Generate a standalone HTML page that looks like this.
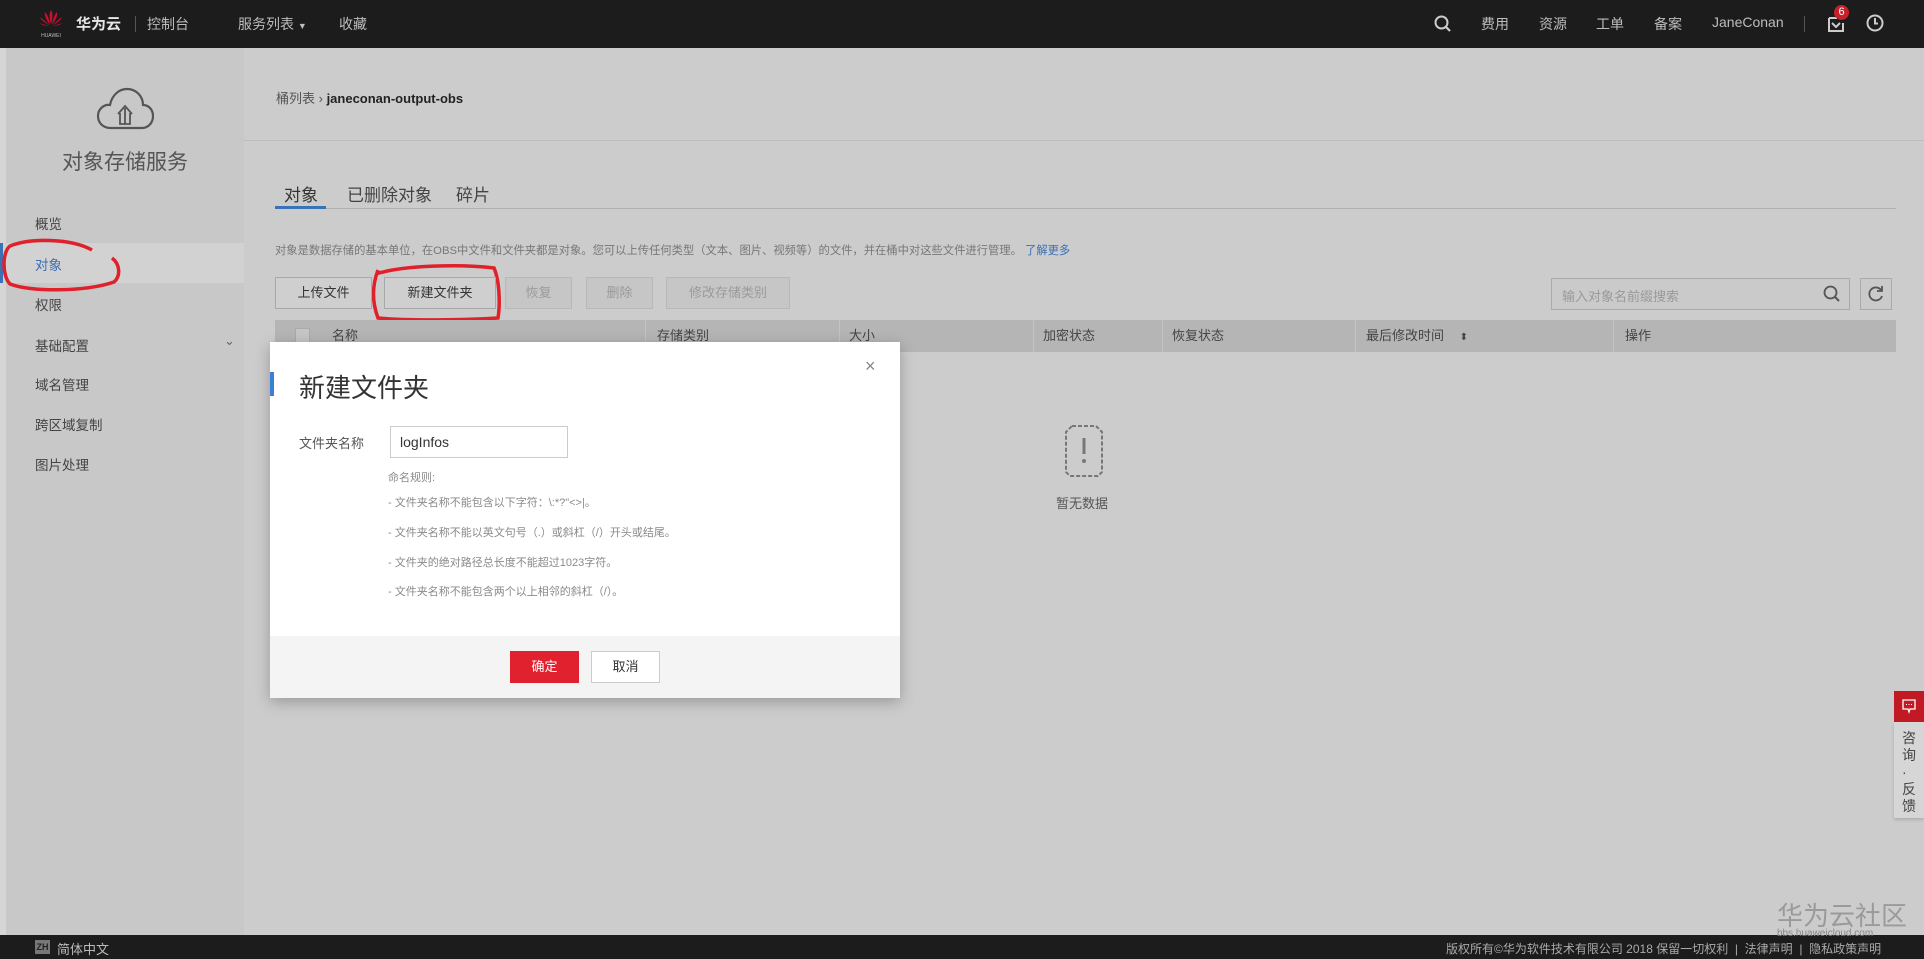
<!DOCTYPE html>
<html><head><meta charset="utf-8"><style>
*{margin:0;padding:0;box-sizing:border-box}
body{width:1924px;height:959px;overflow:hidden;position:relative;background:#cccccc;font-family:"Liberation Sans","Noto Sans CJK SC",sans-serif;color:#333}
.a{position:absolute;white-space:nowrap}
.top{position:absolute;left:0;top:0;width:1924px;height:48px;background:#1c1c1c}
.top .a{color:#bdbdbd;font-size:14px;top:14px}
.side{position:absolute;left:6px;top:48px;width:238px;height:887px;background:#c8c8c8}
.side .m{position:absolute;left:29px;font-size:13.5px;color:#444}
.btn{position:absolute;top:277px;height:32px;border:1px solid #a8a8a8;background:#cfcfcf;font-size:13px;text-align:center;line-height:30px;color:#333}
.btn.d{color:#9a9a9a;background:#c6c6c6;border-color:#b8b8b8}
.th{position:absolute;top:320px;height:32px;font-size:13px;line-height:32px;color:#444}
.sep{position:absolute;top:320px;width:1px;height:32px;background:#c4c4c4}
.rule{position:absolute;left:388px;font-size:11px;color:#8a8a8a}
.foot{position:absolute;left:0;top:935px;width:1924px;height:24px;background:#1c1c1c}
</style></head><body>
<div class="top">
  <svg class="a" style="left:37px;top:8px" width="28" height="30" viewBox="0 0 28 30"><g fill="#c8102e"><path d="M14 2c-2 3-2 8 0 14c2-6 2-11 0-14z"/><path d="M8 4c-1 4 2 9 5 13c-1-5-2-10-5-13z"/><path d="M20 4c1 4-2 9-5 13c1-5 2-10 5-13z"/><path d="M3 9c1 3 5 6 9 8c-3-3-6-6-9-8z"/><path d="M25 9c-1 3-5 6-9 8c3-3 6-6 9-8z"/><path d="M2 15c3 2 7 3 10 3c-3-1-7-2-10-3z"/><path d="M26 15c-3 2-7 3-10 3c3-1 7-2 10-3z"/></g><text x="14" y="29" font-size="5" fill="#bbb" text-anchor="middle" font-family="Liberation Sans">HUAWEI</text></svg>
  <div class="a" style="left:76px;top:13px;color:#e6e6e6;font-size:15px;font-weight:bold">华为云</div>
  <div class="a" style="left:135px;top:16px;width:1px;height:16px;background:#555"></div>
  <div class="a" style="left:147px">控制台</div>
  <div class="a" style="left:238px">服务列表 <span style="font-size:9px">▼</span></div>
  <div class="a" style="left:339px">收藏</div>
  <svg class="a" style="left:1433px;top:14px" width="20" height="20" viewBox="0 0 20 20"><circle cx="8.5" cy="8.5" r="6" fill="none" stroke="#ccc" stroke-width="2"/><path d="M13 13l4 4" stroke="#ccc" stroke-width="2.2"/></svg>
  <div class="a" style="left:1481px">费用</div>
  <div class="a" style="left:1539px">资源</div>
  <div class="a" style="left:1596px">工单</div>
  <div class="a" style="left:1654px">备案</div>
  <div class="a" style="left:1712px">JaneConan</div>
  <div class="a" style="left:1804px;top:16px;width:1px;height:16px;background:#555"></div>
  <svg class="a" style="left:1826px;top:14px" width="20" height="20" viewBox="0 0 20 20"><path d="M3 4h8M3 4v13h14v-8" fill="none" stroke="#ccc" stroke-width="2"/><path d="M6 9l4 4 4-4" fill="none" stroke="#ccc" stroke-width="2"/></svg>
  <div class="a" style="left:1834px;top:5px;width:15px;height:15px;border-radius:50%;background:#c8202a;color:#fff;font-size:11px;line-height:15px;text-align:center">6</div>
  <svg class="a" style="left:1865px;top:13px" width="20" height="20" viewBox="0 0 20 20"><circle cx="10" cy="10" r="7.5" fill="none" stroke="#ccc" stroke-width="2"/><path d="M10 5v5.5h3" fill="none" stroke="#ccc" stroke-width="2"/></svg>
</div>
<div class="a" style="left:0;top:48px;width:6px;height:887px;background:#d6d6d6"></div>
<div class="side">
  <svg class="a" style="left:90px;top:38px" width="58" height="46" viewBox="0 0 58 46"><path d="M15 42C6 42 2 36 2 30c0-7 6-12 12-11C16 9 23 3 31 3c9 0 16 7 16 16c6 0 10 5 10 11c0 7-5 12-11 12z" fill="none" stroke="#555" stroke-width="2.2"/><path d="M29 38V22M22 28l7-8 7 8M24 27v11h10V27" fill="none" stroke="#555" stroke-width="1.8"/></svg>
  <div class="a" style="left:0;width:238px;top:98px;text-align:center;font-size:21px;color:#555">对象存储服务</div>
  <div class="m" style="top:165px">概览</div>
  <div class="a" style="left:-6px;top:195px;width:244px;height:40px;background:#d2d2d2"></div>
  <div class="a" style="left:-6px;top:195px;width:3px;height:40px;background:#3a72b8"></div>
  <div class="m" style="top:206px;color:#3a6fb5">对象</div>
  <div class="m" style="top:246px">权限</div>
  <div class="m" style="top:287px">基础配置</div>
  <div class="a" style="left:218px;top:285px;font-size:13px;color:#666">⌄</div>
  <div class="m" style="top:326px">域名管理</div>
  <div class="m" style="top:366px">跨区域复制</div>
  <div class="m" style="top:406px">图片处理</div>
</div>
<svg class="a" style="left:0;top:236px" width="125" height="60"><path d="M92 14C70 2 30 2 10 10C2 16 2 40 10 48C30 56 85 56 114 46C121 40 120 28 112 22" fill="none" stroke="#e0202a" stroke-width="3.5"/></svg>
<svg class="a" style="left:368px;top:262px" width="136" height="62"><path d="M8 12C35 3 95 2 126 6C132 20 132 44 130 56C100 58 40 59 10 56C4 40 4 24 10 8" fill="none" stroke="#e0202a" stroke-width="3.5"/></svg>
<div class="a" style="left:244px;top:140px;width:1680px;height:1px;background:#bdbdbd"></div>
<div class="a" style="left:276px;top:88px;font-size:13px;color:#555">桶列表 › <span style="color:#222;font-weight:bold">janeconan-output-obs</span></div>
<div class="a" style="left:275px;top:208px;width:1621px;height:1px;background:#b0b0b0"></div>
<div class="a" style="left:275px;top:206px;width:51px;height:3px;background:#3a72b8"></div>
<div class="a" style="left:284px;top:181px;font-size:17px;color:#333">对象</div>
<div class="a" style="left:347px;top:181px;font-size:17px;color:#444">已删除对象</div>
<div class="a" style="left:456px;top:181px;font-size:17px;color:#444">碎片</div>
<div class="a" style="left:275px;top:242px;font-size:11.3px;color:#777">对象是数据存储的基本单位，在OBS中文件和文件夹都是对象。您可以上传任何类型（文本、图片、视频等）的文件，并在桶中对这些文件进行管理。 <span style="color:#3a6fb5">了解更多</span></div>
<div class="btn" style="left:275px;width:97px">上传文件</div>
<div class="btn" style="left:384px;width:112px">新建文件夹</div>
<div class="btn d" style="left:505px;width:67px">恢复</div>
<div class="btn d" style="left:586px;width:67px">删除</div>
<div class="btn d" style="left:666px;width:124px">修改存储类别</div>
<div class="a" style="left:1551px;top:278px;width:299px;height:32px;border:1px solid #aaa;background:#cacaca"></div>
<div class="a" style="left:1562px;top:286px;font-size:13px;color:#999">输入对象名前缀搜索</div>
<svg class="a" style="left:1822px;top:284px" width="20" height="20" viewBox="0 0 20 20"><circle cx="8.5" cy="8.5" r="6" fill="none" stroke="#555" stroke-width="1.8"/><path d="M13 13l4 4" stroke="#555" stroke-width="2"/></svg>
<div class="a" style="left:1860px;top:278px;width:32px;height:32px;border:1px solid #aaa;background:#cacaca"></div>
<svg class="a" style="left:1866px;top:284px" width="20" height="20" viewBox="0 0 20 20"><path d="M15 6A6.5 6.5 0 1 0 16 12" fill="none" stroke="#555" stroke-width="1.8"/><path d="M16 2v5h-5" fill="none" stroke="#555" stroke-width="1.8"/></svg>
<div class="a" style="left:275px;top:320px;width:1621px;height:32px;background:#b5b5b5"></div>
<div class="a" style="left:295px;top:328px;width:15px;height:15px;border:1px solid #aaa;background:#c6c6c6"></div>
<div class="th" style="left:332px">名称</div>
<div class="sep" style="left:645px"></div><div class="th" style="left:657px">存储类别</div>
<div class="sep" style="left:839px"></div><div class="th" style="left:849px">大小</div>
<div class="sep" style="left:1033px"></div><div class="th" style="left:1043px">加密状态</div>
<div class="sep" style="left:1162px"></div><div class="th" style="left:1172px">恢复状态</div>
<div class="sep" style="left:1355px"></div><div class="th" style="left:1366px">最后修改时间 <span style="font-size:10px;margin-left:12px">⬍</span></div>
<div class="sep" style="left:1613px"></div><div class="th" style="left:1625px">操作</div>
<svg class="a" style="left:1058px;top:420px" width="52" height="58" viewBox="0 0 52 58"><path d="M14 6h24l6 6v40l-4 4H12l-4-4V12z" fill="none" stroke="#777" stroke-width="2" stroke-dasharray="4 2"/><path d="M26 18v16" stroke="#777" stroke-width="3"/><circle cx="26" cy="41" r="2" fill="#777"/></svg>
<div class="a" style="left:1056px;top:493px;font-size:13px;color:#555">暂无数据</div>
<div class="a" style="left:270px;top:342px;width:630px;height:356px;background:#fff;box-shadow:0 4px 14px rgba(0,0,0,.25)"></div>
<div class="a" style="left:270px;top:636px;width:630px;height:62px;background:#f4f4f4"></div>
<div class="a" style="left:270px;top:372px;width:4px;height:24px;background:#3a7fd0"></div>
<div class="a" style="left:299px;top:368px;font-size:26px;color:#333">新建文件夹</div>
<div class="a" style="left:865px;top:356px;font-size:18px;color:#888">×</div>
<div class="a" style="left:299px;top:433px;font-size:13px;color:#555">文件夹名称</div>
<div class="a" style="left:390px;top:426px;width:178px;height:32px;border:1px solid #ccc"></div>
<div class="a" style="left:400px;top:434px;font-size:14px;color:#333">logInfos</div>
<div class="rule" style="top:469px">命名规则:</div>
<div class="rule" style="top:494px">- 文件夹名称不能包含以下字符：\:*?"&lt;&gt;|。</div>
<div class="rule" style="top:524px">- 文件夹名称不能以英文句号（.）或斜杠（/）开头或结尾。</div>
<div class="rule" style="top:554px">- 文件夹的绝对路径总长度不能超过1023字符。</div>
<div class="rule" style="top:583px">- 文件夹名称不能包含两个以上相邻的斜杠（/）。</div>
<div class="a" style="left:510px;top:651px;width:69px;height:32px;background:#e1222e;color:#fff;font-size:13px;line-height:32px;text-align:center">确定</div>
<div class="a" style="left:591px;top:651px;width:69px;height:32px;background:#fff;border:1px solid #ccc;color:#333;font-size:13px;line-height:30px;text-align:center">取消</div>
<div class="a" style="left:1894px;top:691px;width:30px;height:31px;background:#c21a24"></div>
<svg class="a" style="left:1900px;top:697px" width="18" height="18" viewBox="0 0 18 18"><path d="M3 3h12v9H10l-1 3-1-3H3z" fill="none" stroke="#fff" stroke-width="1.3"/><path d="M6 7.5h6" stroke="#fff" stroke-dasharray="1 1.5"/></svg>
<div class="a" style="left:1894px;top:722px;width:30px;height:96px;background:#d6d6d6;box-shadow:0 2px 3px rgba(0,0,0,.15)"></div>
<div class="a" style="left:1902px;top:730px;font-size:14px;line-height:17px;color:#444;white-space:normal;width:16px">咨询·反馈</div>
<div class="a" style="left:1777px;top:896px;font-size:26px;color:#9a9a9a">华为云社区</div>
<div class="foot">
  <div class="a" style="left:35px;top:5px;width:15px;height:14px;background:#777;color:#222;font-size:9px;font-weight:bold;line-height:14px;text-align:center">ZH</div>
  <div class="a" style="left:57px;top:4px;font-size:13px;color:#bbb">简体中文</div>
  <div class="a" style="left:1446px;top:5px;font-size:12px;color:#aaa">版权所有©华为软件技术有限公司 2018 保留一切权利 &nbsp;|&nbsp; 法律声明 &nbsp;|&nbsp; 隐私政策声明</div>
</div>
<div class="a" style="left:1777px;top:928px;font-size:10px;color:#888">bbs.huaweicloud.com</div>
</body></html>
